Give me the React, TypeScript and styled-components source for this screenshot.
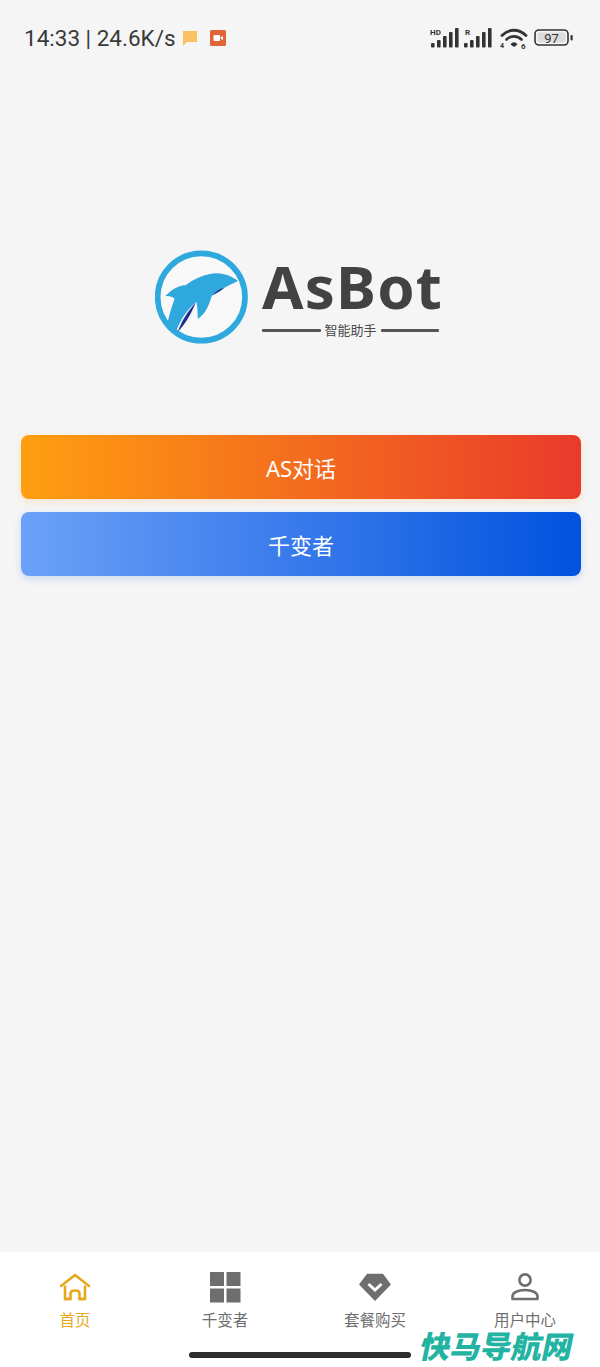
import React, { FC } from "react";
import styled, { createGlobalStyle } from "styled-components";

const GlobalStyle = createGlobalStyle`
  html, body {
    margin: 0;
    padding: 0;
    background: #f5f5f5;
  }
  * {
    box-sizing: border-box;
  }
`;

const cjk = `"Noto Sans", "Noto Sans CJK SC", sans-serif`;

const StyledPage = styled.div`
  position: relative;
  width: 600px;
  height: 1367px;
  overflow: hidden;
  display: flex;
  flex-direction: column;
  background: #f5f5f5;
  font-family: ${cjk};
`;

const StyledStatusBar = styled.div`
  height: 76px;
  padding: 0 26px 0 24px;
  display: flex;
  align-items: center;
  justify-content: space-between;
`;

const StyledStatusLeft = styled.div`
  display: flex;
  align-items: center;
`;

const StyledClock = styled.span`
  font-family: Roboto, sans-serif;
  font-size: 22.5px;
  color: #3a3a3a;
  white-space: nowrap;
`;

const StyledStatusRight = styled.div`
  display: flex;
  align-items: center;
`;

const StyledLogo = styled.div`
  margin-top: 174px;
  height: 94px;
  padding-left: 155px;
  display: flex;
  align-items: center;
  gap: 13px;
`;

const StyledBrand = styled.div`
  width: 177px;
  display: flex;
  flex-direction: column;
`;

const StyledBrandName = styled.div`
  font-family: "Noto Sans", sans-serif;
  font-weight: 700;
  font-size: 60px;
  line-height: 62px;
  height: 62px;
  letter-spacing: 1.2px;
  color: #424242;
  padding-left: 0;
`;

const StyledSlogan = styled.div`
  margin-top: 4px;
  display: flex;
  align-items: center;
  gap: 4px;
  font-size: 13px;
  line-height: 18px;
  color: #4a4a4a;
  white-space: nowrap;
`;

const StyledRule = styled.span`
  flex: 1;
  height: 3px;
  background: #555;
  border-radius: 1px;
`;

const StyledActions = styled.div`
  margin-top: 91px;
  padding: 0 19px 0 21px;
  display: flex;
  flex-direction: column;
  gap: 13px;
`;

const StyledAction = styled.button<{ $tone: "orange" | "blue" }>`
  height: 64px;
  border: none;
  border-radius: 8px;
  color: #fff;
  font-family: ${cjk};
  font-size: 22px;
  background: ${(p) =>
    p.$tone === "orange"
      ? "linear-gradient(90deg, #ff9f10, #e93a2b)"
      : "linear-gradient(90deg, #6ca1f8, #0252de)"};
  box-shadow: 0 3px 8px
    ${(p) =>
      p.$tone === "orange" ? "rgba(250, 150, 40, 0.18)" : "rgba(40, 110, 230, 0.2)"};
`;

const StyledTabBar = styled.div`
  margin-top: auto;
  height: 115px;
  padding-top: 18px;
  background: #fff;
  display: grid;
  grid-template-columns: repeat(4, 150px);
  align-items: start;
`;

const StyledTab = styled.div<{ $active?: boolean }>`
  display: flex;
  flex-direction: column;
  align-items: center;
  color: ${(p) => (p.$active ? "#e6a91e" : "#6e6e6e")};
`;

const StyledTabIcon = styled.div`
  width: 34px;
  height: 34px;
  display: flex;
  align-items: center;
  justify-content: center;
`;

const StyledTabLabel = styled.span`
  margin-top: 5px;
  font-size: 15.5px;
  line-height: 22px;
  white-space: nowrap;
`;

const StyledHomeBar = styled.div`
  position: absolute;
  left: 189px;
  bottom: 9px;
  width: 222px;
  height: 6px;
  border-radius: 3px;
  background: #2d2d2d;
`;

const StyledWatermark = styled.div`
  position: absolute;
  left: 421px;
  top: 1327px;
  width: 156px;
  font-family: "Noto Sans CJK SC", sans-serif;
  font-weight: 900;
  font-size: 30.5px;
  line-height: 36px;
  white-space: nowrap;
  color: #22b3a2;
  transform: skewX(-12deg);
`;

const Signal: FC<{ tag: string; tagX: number }> = ({ tag, tagX }) => (
  <svg width="30" height="22" viewBox="0 0 30 22" style={{ marginRight: 3 }}>
    <text x={tagX} y="7.5" fontFamily="Roboto, sans-serif" fontWeight="700" fontSize="8" fill="#333">
      {tag}
    </text>
    <rect x="1" y="16" width="3.6" height="4.5" rx="1" fill="#333" />
    <rect x="7" y="13" width="3.6" height="7.5" rx="1" fill="#333" />
    <rect x="13" y="9" width="3.6" height="11.5" rx="1" fill="#333" />
    <rect x="19" y="5" width="3.6" height="15.5" rx="1" fill="#333" />
    <rect x="25" y="1" width="3.6" height="19.5" rx="1" fill="#333" />
  </svg>
);

const WifiIcon: FC = () => (
  <svg width="28" height="22" viewBox="0 0 28 22" fill="none" style={{ marginLeft: 4 }}>
    <path d="M2 8.5C9 1.5 19 1.5 26 8.5" stroke="#333" strokeWidth="2.8" strokeLinecap="round" />
    <path d="M6.5 12.5C10.5 8.3 17.5 8.3 21.5 12.5" stroke="#333" strokeWidth="2.6" strokeLinecap="round" />
    <path d="M10.5 17.5C12.5 14.6 15.5 14.6 17.5 17.5L14 20Z" fill="#333" />
    <text x="0" y="21" fontFamily="Roboto, sans-serif" fontWeight="700" fontSize="7" fill="#333">
      4
    </text>
    <text x="21" y="21.5" fontFamily="Roboto, sans-serif" fontWeight="700" fontSize="8" fill="#333">
      6
    </text>
  </svg>
);

const BatteryIcon: FC = () => (
  <svg width="40" height="20" viewBox="0 0 40 20" fill="none" style={{ marginLeft: 6 }}>
    <rect x="1" y="2" width="33" height="15" rx="4" stroke="#333" strokeWidth="1.6" />
    <rect x="3.5" y="4.5" width="28" height="10" rx="2" fill="#dcdcdc" />
    <rect x="36.5" y="7" width="2.2" height="5.5" rx="1" fill="#333" />
    <text x="17.5" y="15" textAnchor="middle" fontFamily="Roboto, sans-serif" fontSize="13" fill="#333">
      97
    </text>
  </svg>
);

const DolphinLogo: FC = () => (
  <svg width="94" height="94" viewBox="14 14 282 282">
    <circle cx="153" cy="155" r="131" fill="#f8f8f8" stroke="#2fa8de" strokeWidth="17" />
    <path
      d="M263 107C246 94 226 85 200 84C168 84 132 100 106 120C88 118 62 134 45 152C56 151 66 153 73 160C62 190 52 222 50 250L76 262C88 226 112 190 138 170C142 186 142 204 142 220C162 210 176 182 184 152C208 134 236 120 263 107Z"
      fill="#2fa8de"
    />
    <path d="M82 260C94 226 112 198 136 172C124 202 106 234 82 260Z" fill="#1d2f8c" />
    <path d="M186 150C196 138 208 130 222 127C212 136 198 144 186 150Z" fill="#1d2f8c" />
  </svg>
);

const tabs = [
  {
    label: "首页",
    active: true,
    icon: (
      <svg width="32" height="30" viewBox="0 0 32 30" fill="none" stroke="currentColor" strokeWidth="2.6">
        <path d="M2 14L16 3L30 14" strokeLinecap="round" strokeLinejoin="round" />
        <path d="M6 13.5V27H11.5V21.5C11.5 19.5 13 18.5 16 18.5C19 18.5 20.5 19.5 20.5 21.5V27H26V13.5" />
        <path d="M6 27H11.5M20.5 27H26" />
      </svg>
    ),
  },
  {
    label: "千变者",
    icon: (
      <svg width="32" height="32" viewBox="0 0 32 32" fill="currentColor">
        <rect x="1" y="1" width="14" height="14" />
        <rect x="17.5" y="1" width="14" height="14" />
        <rect x="1" y="17.5" width="14" height="14" />
        <rect x="17.5" y="17.5" width="14" height="14" />
      </svg>
    ),
  },
  {
    label: "套餐购买",
    icon: (
      <svg width="32" height="28" viewBox="0 0 32 28">
        <path d="M8.5 1.5H23.5L31 11.5L16 27L1 11.5Z" fill="currentColor" stroke="currentColor" strokeWidth="1.5" strokeLinejoin="round" />
        <path d="M9.5 11L16 17L22.5 11" fill="none" stroke="#fff" strokeWidth="3" />
      </svg>
    ),
  },
  {
    label: "用户中心",
    icon: (
      <svg width="30" height="30" viewBox="0 0 30 30" fill="none" stroke="currentColor" strokeWidth="2.6">
        <circle cx="15" cy="8" r="5.6" />
        <path d="M2.5 27V24.5C2.5 20.5 8 18 15 18C22 18 27.5 20.5 27.5 24.5V27Z" strokeLinejoin="round" />
      </svg>
    ),
  },
];

export default function App() {
  return (
    <StyledPage>
      <GlobalStyle />
      <StyledStatusBar>
        <StyledStatusLeft>
          <StyledClock>14:33 | 24.6K/s</StyledClock>
          <svg width="16" height="17" viewBox="0 0 16 17" style={{ marginLeft: 6 }}>
            <path d="M1 1H15V12H5L1 16Z" fill="#f8c262" />
          </svg>
          <svg width="16" height="16" viewBox="0 0 16 16" style={{ marginLeft: 12 }}>
            <rect width="16" height="16" rx="1.5" fill="#e0633a" />
            <rect x="3.5" y="5" width="6.5" height="6" rx="1" fill="#fff" />
            <path d="M10.5 7.5L13 6V10L10.5 8.5Z" fill="#fff" />
          </svg>
        </StyledStatusLeft>
        <StyledStatusRight>
          <Signal tag="HD" tagX={0} />
          <Signal tag="R" tagX={2} />
          <WifiIcon />
          <BatteryIcon />
        </StyledStatusRight>
      </StyledStatusBar>

      <StyledLogo>
        <DolphinLogo />
        <StyledBrand>
          <StyledBrandName>AsBot</StyledBrandName>
          <StyledSlogan>
            <StyledRule />
            智能助手
            <StyledRule />
          </StyledSlogan>
        </StyledBrand>
      </StyledLogo>

      <StyledActions>
        <StyledAction $tone="orange">AS对话</StyledAction>
        <StyledAction $tone="blue">千变者</StyledAction>
      </StyledActions>

      <StyledTabBar>
        {tabs.map((tab) => (
          <StyledTab key={tab.label} $active={tab.active}>
            <StyledTabIcon>{tab.icon}</StyledTabIcon>
            <StyledTabLabel>{tab.label}</StyledTabLabel>
          </StyledTab>
        ))}
      </StyledTabBar>

      <StyledHomeBar />
      <StyledWatermark>快马导航网</StyledWatermark>
    </StyledPage>
  );
}
